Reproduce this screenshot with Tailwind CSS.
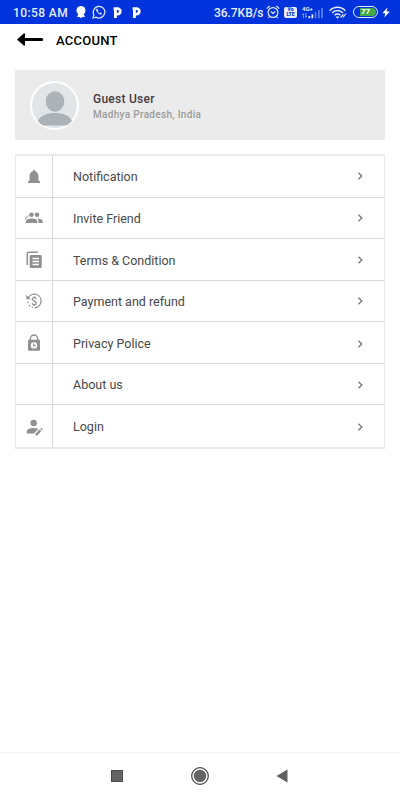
<!DOCTYPE html>
<html lang="en">
<head>
<meta charset="utf-8">
<title>Account</title>
<script src="https://cdn.jsdelivr.net/npm/@tailwindcss/browser@4"></script>
</head>
<body class="bg-white">
<div class="w-[400px] h-[800px] flex flex-col overflow-hidden bg-white font-['Roboto',sans-serif]">
  <header class="h-6 shrink-0 bg-[#0033dc] flex items-center justify-between pl-[13px] pr-[10px] text-[#e6edff] whitespace-nowrap">
    <div class="flex items-center">
      <span class="w-[56px] pt-[2px] text-[12px] leading-[22px] font-medium tracking-[0.4px]">10:58 AM</span>
      <svg class="w-[10px] h-3 ml-[7px]" viewBox="0 0 10 12" fill="#fff"><circle cx="5" cy="4.500" r="4.500"/><path d="M2.500 8h5l1.700 3-2-.3L5 12l-2.200-1.300-2 .3z"/></svg>
      <svg class="w-[14px] h-[14px] ml-[6px]" viewBox="0 0 14 14" fill="none" stroke="#e6edff" stroke-width="1.200"><path d="M1 13l.9-3.200A5.800 5.800 0 1 1 4.200 12.200z"/><path d="M4.900 3.800c-.9.600-.8 2.100.8 3.800s3.200 2.200 4 1.200l-1.500-1.100-.8.6c-.9-.4-1.500-1-1.900-1.900l.6-.8z" fill="#e6edff" stroke-width=".5"/></svg>
      <svg class="w-[9px] h-[11px] ml-[7px]" viewBox="0 0 9 11" fill="none" stroke="#fff" stroke-width="2.800"><path d="M.6 1.600H4.500a2.700 2.700 0 0 1 0 5.600H2.500M2.400 1.600V11"/></svg>
      <svg class="w-[9px] h-[11px] ml-[10px]" viewBox="0 0 9 11" fill="none" stroke="#fff" stroke-width="2.800"><path d="M.6 1.600H4.500a2.700 2.700 0 0 1 0 5.600H2.500M2.400 1.600V11"/></svg>
    </div>
    <div class="flex items-center">
      <span class="w-[50px] pt-[2px] text-[12px] leading-[22px] font-medium tracking-[-0.05px]">36.7KB/s</span>
      <svg class="w-[14px] h-[14px] ml-[2px]" viewBox="0 0 14 14" fill="none" stroke="#e6edff" stroke-width="1.200"><circle cx="7" cy="7.500" r="4.900"/><path d="M.8 3.600L3.600 1M13.200 3.600L10.400 1M4.800 6.500L7 8.500l2.200-2M3.500 11.500L2.300 13M10.500 11.500l1.200 1.500"/></svg>
      <span class="w-[13px] h-[11px] ml-[4px] rounded-[2px] bg-[#e6edff] text-[#0033dc] text-[5px] leading-[5px] font-black flex flex-col items-center justify-center"><span>Vo</span><span>LTE</span></span>
      <span class="w-[22px] h-[13px] ml-[5px] flex flex-col">
        <span class="text-[6px] leading-[5px] font-bold">4G+</span>
        <svg class="w-[22px] h-[13px] -mt-[5px] shrink-0" viewBox="0 0 22 13" fill="#e6edff"><path d="M1 12V9L.1 9l1.400-2v5zM3.600 7v5L5 10l-.8 0V7zM6.500 10h1.700v2.300H6.500zM9.500 8.300h1.700v4H9.500z"/><path fill-opacity=".4" d="M12.700 6h1.700v6.300h-1.700zM16 4h1.700v8.300H16zM19.200 2h1.700v10.300h-1.700z"/></svg>
      </span>
      <svg class="w-[18px] h-[13px] ml-[5px]" viewBox="0 0 18 13" fill="none" stroke="#e6edff" stroke-width="1.500"><path d="M.7 4.700a10.500 10.500 0 0 1 15.600 0M3.100 7a7.200 7.200 0 0 1 10.800 0M5.600 9.300a4 4 0 0 1 5.800 0"/><path d="M6.500 10.500h4l-2 2.200z" fill="#e6edff" stroke="none"/><path d="M11.500 11.500l3-3M14 11.500l3-4" stroke-width="1.100"/></svg>
      <span class="w-[25px] h-3 ml-[6px] rounded-full border border-[#e6edff] p-[1px] flex"><span class="grow rounded-full bg-[linear-gradient(90deg,#0033dc_22%,#42ab42_22%)] text-white text-[8px] leading-[8px] font-bold text-center">77</span></span>
      <svg class="w-[8px] h-[11px] ml-[4px]" viewBox="0 0 8 11" fill="#fff"><path d="M5.500.5L.3 6.300h3L2.300 10.500 7.800 4.500H4.700z"/></svg>
    </div>
  </header>

  <div class="h-[33px] shrink-0 flex items-center pl-[17px]">
    <svg class="w-[27px] h-[13px] -mt-[2px]" viewBox="0 0 27 13"><path d="M1 6.500L7.300 1v11z" fill="#000" stroke="#000" stroke-width="1.500" stroke-linejoin="round"/><path d="M6 6.500h18.700" stroke="#000" stroke-width="3" stroke-linecap="round"/></svg>
    <h1 class="ml-3 text-[13px] leading-4 font-medium text-black tracking-[0.25px]">ACCOUNT</h1>
  </div>

  <section class="mx-[15px] mt-[13px] h-[70px] shrink-0 bg-[#ebebeb] flex items-center pl-[15px]">
    <svg class="w-[49px] h-[49px]" viewBox="0 0 49 49"><circle cx="24.500" cy="24.500" r="23.500" fill="#e2e5e8" stroke="#fff" stroke-width="2"/><ellipse cx="25" cy="20.500" rx="9.300" ry="10.200" fill="#acb3b8"/><path d="M7.500 40C10.500 34.500 17 32 25 32s14.500 2.500 17 8q-2.500 3-6 4.500H13.500Q10 43 7.500 40z" fill="#acb3b8"/></svg>
    <div class="ml-[14px] pt-[3px]">
      <p class="text-[12px] leading-4 font-medium text-[#483a40] tracking-[0.25px]">Guest User</p>
      <p class="text-[10px] leading-4 font-medium text-[#9b9b9b] tracking-[0.32px]">Madhya Pradesh, India</p>
    </div>
  </section>

  <nav class="mx-[15px] mt-[14px] h-[295px] shrink-0 border-2 border-[#e8e8e8] border-t-[#ebebeb] border-x-[1.5px] grid grid-rows-7 divide-y divide-[#d8d8d8] text-[12.5px] text-[#484848]">
    <a class="flex items-center"><span class="w-[37px] h-full border-r border-[#d8d8d8] flex items-center justify-center"><svg class="w-4 h-4 mt-[2px]" viewBox="0 0 16 16" fill="#909090"><path d="M8 1c-.8 0-1.200.5-1.200 1.200C4.700 2.800 3.600 4.600 3.600 6.800V11L2 12.700V14h12v-1.300L12.400 11V6.800c0-2.200-1.100-4-3.200-4.600C9.200 1.500 8.800 1 8 1z"/></svg></span><span class="ml-5 pt-[3px] grow">Notification</span><svg class="w-2 h-2 mr-[20px]" viewBox="0 0 8 8" fill="none" stroke="#757575" stroke-width="1.300"><path d="M2.500.8L5.800 4 2.500 7.200"/></svg></a>
    <a class="flex items-center"><span class="w-[37px] h-full border-r border-[#d8d8d8] flex items-center justify-center"><svg class="w-[18px] h-4" viewBox="0 0 18 16" fill="#909090"><circle cx="6.500" cy="4.800" r="2.300"/><circle cx="12" cy="4.800" r="2.300"/><path d="M1 13v-1.600C1 9.300 4 8.500 6.700 8.500s5.600.8 5.600 2.900V13zM13.500 13v-1.800c0-1-.5-1.900-1.400-2.600 2.500 0 5.700.9 5.700 2.800V13zM1 6.800h1.400v1.100H1zM2.500 5.400h1.300v1.100H2.500zM0 8.300h1.200v1.200H0z"/></svg></span><span class="ml-5 pt-[3px] grow">Invite Friend</span><svg class="w-2 h-2 mr-[20px]" viewBox="0 0 8 8" fill="none" stroke="#757575" stroke-width="1.300"><path d="M2.500.8L5.800 4 2.500 7.200"/></svg></a>
    <a class="flex items-center"><span class="w-[37px] h-full border-r border-[#d8d8d8] flex items-center justify-center"><svg class="w-4 h-[18px] mt-[2px]" viewBox="0 0 16 18"><path d="M1.300 14V2.200Q1.300 1.200 2.300 1.200H12" fill="none" stroke="#909090" stroke-width="1.500"/><rect x="3.700" y="4" width="12" height="13" rx="1.200" fill="#909090"/><path d="M6.500 7.500h6.500M6.500 10.500h6.500M6.500 13.500h6.500" stroke="#fff" stroke-width="1.300"/></svg></span><span class="ml-5 pt-[3px] grow">Terms &amp; Condition</span><svg class="w-2 h-2 mr-[20px] mt-[2px]" viewBox="0 0 8 8" fill="none" stroke="#757575" stroke-width="1.300"><path d="M2.500.8L5.800 4 2.500 7.200"/></svg></a>
    <a class="flex items-center"><span class="w-[37px] h-full border-r border-[#d8d8d8] flex items-center justify-center"><svg class="w-4 h-4" viewBox="0 0 16 16" fill="none" stroke="#909090" stroke-width="1.300"><path d="M2.200 5A6.800 6.800 0 1 1 8.500 14.800"/><path d="M7 14.500A6.800 6.800 0 0 1 1.700 7.500" stroke-dasharray="1.500 1.900"/><path d="M.3 1.800v4.400h4.400z" fill="#909090" stroke="none"/><path d="M10.200 6.200c0-2.200-4-2.200-4 0s4 1.600 4 3.800-4 2.200-4 0M8.200 3.200v1.500M8.200 11.500V13" stroke-width="1.200"/></svg></span><span class="ml-5 pt-[3px] grow">Payment and refund</span><svg class="w-2 h-2 mr-[20px]" viewBox="0 0 8 8" fill="none" stroke="#757575" stroke-width="1.300"><path d="M2.500.8L5.800 4 2.500 7.200"/></svg></a>
    <a class="flex items-center"><span class="w-[37px] h-full border-r border-[#d8d8d8] flex items-center justify-center"><svg class="w-[14px] h-[18px]" viewBox="0 0 14 18"><path d="M3.300 7V4.800a3.700 3.700 0 0 1 7.400 0V7" fill="none" stroke="#909090" stroke-width="1.500"/><rect x="1" y="5.800" width="12" height="11" rx="1" fill="#909090"/><circle cx="7" cy="11.400" r="3.200" fill="#fff"/><path d="M6.700 9.400v2.300h2" fill="none" stroke="#909090" stroke-width="1.200"/></svg></span><span class="ml-5 pt-[3px] grow">Privacy Police</span><svg class="w-2 h-2 mr-[20px] mt-[2px]" viewBox="0 0 8 8" fill="none" stroke="#757575" stroke-width="1.300"><path d="M2.500.8L5.800 4 2.500 7.200"/></svg></a>
    <a class="flex items-center"><span class="w-[37px] h-full border-r border-[#d8d8d8]"></span><span class="ml-5 pt-[3px] grow">About us</span><svg class="w-2 h-2 mr-[20px] mt-[2px]" viewBox="0 0 8 8" fill="none" stroke="#757575" stroke-width="1.300"><path d="M2.500.8L5.800 4 2.500 7.200"/></svg></a>
    <a class="flex items-center"><span class="w-[37px] h-full border-r border-[#d8d8d8] flex items-center justify-center"><svg class="w-[17px] h-[17px] mt-[2px]" viewBox="0 0 17 17" fill="#909090"><circle cx="7.700" cy="4" r="3.200"/><path d="M.8 14.500v-2C.8 10 4.500 9 7.700 9c1.700 0 3.400.3 4.700.9L8 14.500zM9.500 16.500v-1.800l4-4.200 1.700 1.700-4 4.300zM14.200 9.800l1-1 1.600 1.700-1 1z"/></svg></span><span class="ml-5 pt-[3px] grow">Login</span><svg class="w-2 h-2 mr-[20px] mt-[2px]" viewBox="0 0 8 8" fill="none" stroke="#757575" stroke-width="1.300"><path d="M2.500.8L5.800 4 2.500 7.200"/></svg></a>
  </nav>

  <footer class="mt-auto h-12 shrink-0 border-t border-[#f3f3f3] flex items-center justify-between pl-[111px] pr-[112px] pb-[2px]">
    <span class="w-3 h-3 bg-[#646464] border border-[#4c4c4c]"></span>
    <svg class="w-[18px] h-[18px]" viewBox="0 0 18 18"><circle cx="9" cy="9" r="8.300" fill="none" stroke="#444" stroke-width="1.200"/><circle cx="9" cy="9" r="6.200" fill="#646464"/></svg>
    <svg class="w-3 h-[14px]" viewBox="0 0 12 14"><path d="M.5 7L11.500.5v13z" fill="#606060"/></svg>
  </footer>
</div>
</body>
</html>
